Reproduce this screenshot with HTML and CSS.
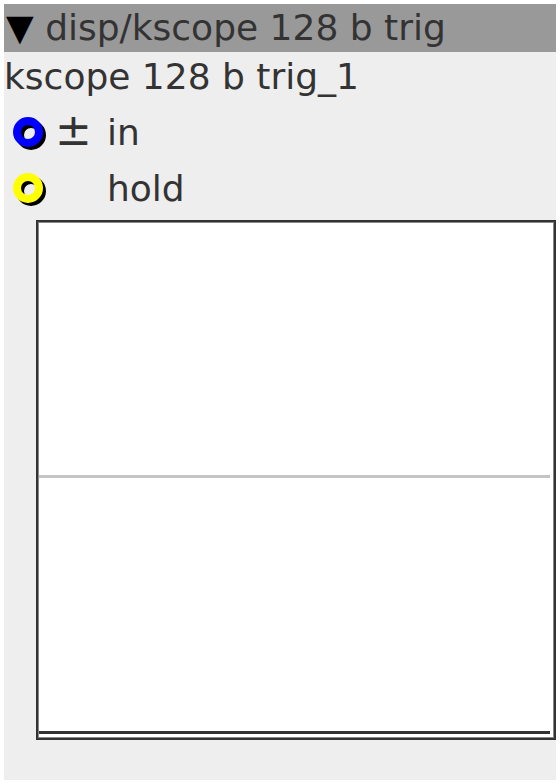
FILE: index.html
```html
<!DOCTYPE html>
<html>
<head>
<meta charset="utf-8">
<title>kscope 128 b trig</title>
<link rel="stylesheet" href="styles.css">
</head>
<body>
<div class="panel">
  <div class="head"><span class="tri">&#9660;</span> disp/kscope 128 b trig</div>
  <div class="inst">kscope 128 b trig_1</div>
  <div class="row">
    <svg class="ring" width="40" height="40" viewBox="0 0 40 40">
      <circle cx="18" cy="23" r="11" fill="none" stroke="#000" stroke-width="8"/>
      <circle cx="15" cy="20" r="11" fill="none" stroke="#0000ff" stroke-width="8"/>
    </svg>
    <span class="pm">&plusmn;</span>
    <span class="lbl">in</span>
  </div>
  <div class="row">
    <svg class="ring" width="40" height="40" viewBox="0 0 40 40">
      <circle cx="18" cy="23" r="11" fill="none" stroke="#000" stroke-width="8"/>
      <circle cx="15" cy="20" r="11" fill="none" stroke="#ffff00" stroke-width="8"/>
    </svg>
    <span class="pm"></span>
    <span class="lbl">hold</span>
  </div>
  <div class="scope">
    <svg width="514" height="514" viewBox="0 0 514 514">
      <rect x="0" y="252" width="511" height="3" fill="#c4c4c4"/>
      <rect x="0" y="508" width="511" height="3" fill="#333"/>
    </svg>
  </div>
</div>
</body>
</html>
```
FILE: styles.css
```css
body, html {
  margin: 0;
  padding: 0;
  background: #fff;
  font-family: "DejaVu Sans", sans-serif;
  color: #333;
}
.panel {
  margin: 4px;
  width: 552px;
  height: 776px;
  background: #eee;
}
.head {
  height: 48px;
  line-height: 48px;
  background: #999;
  font-size: 36px;
  padding-left: 2px;
  white-space: nowrap;
}
.tri {
  color: #000;
}
.inst {
  height: 52px;
  line-height: 50px;
  font-size: 36px;
  white-space: nowrap;
}
.row {
  height: 56px;
  display: flex;
  align-items: center;
  font-size: 36px;
}
.ring {
  margin-left: 9px;
  flex: none;
}
.pm {
  width: 52px;
  padding-left: 2px;
  font-size: 44px;
  line-height: 44px;
  margin-top: -4px;
}
.scope {
  margin: 4px 0 0 32px;
  width: 520px;
  height: 520px;
  box-sizing: border-box;
  border: 2px solid #333;
  box-shadow: inset 0 0 0 1px #888;
  background: #fff;
  padding: 1px;
}
.scope svg {
  display: block;
}
```
